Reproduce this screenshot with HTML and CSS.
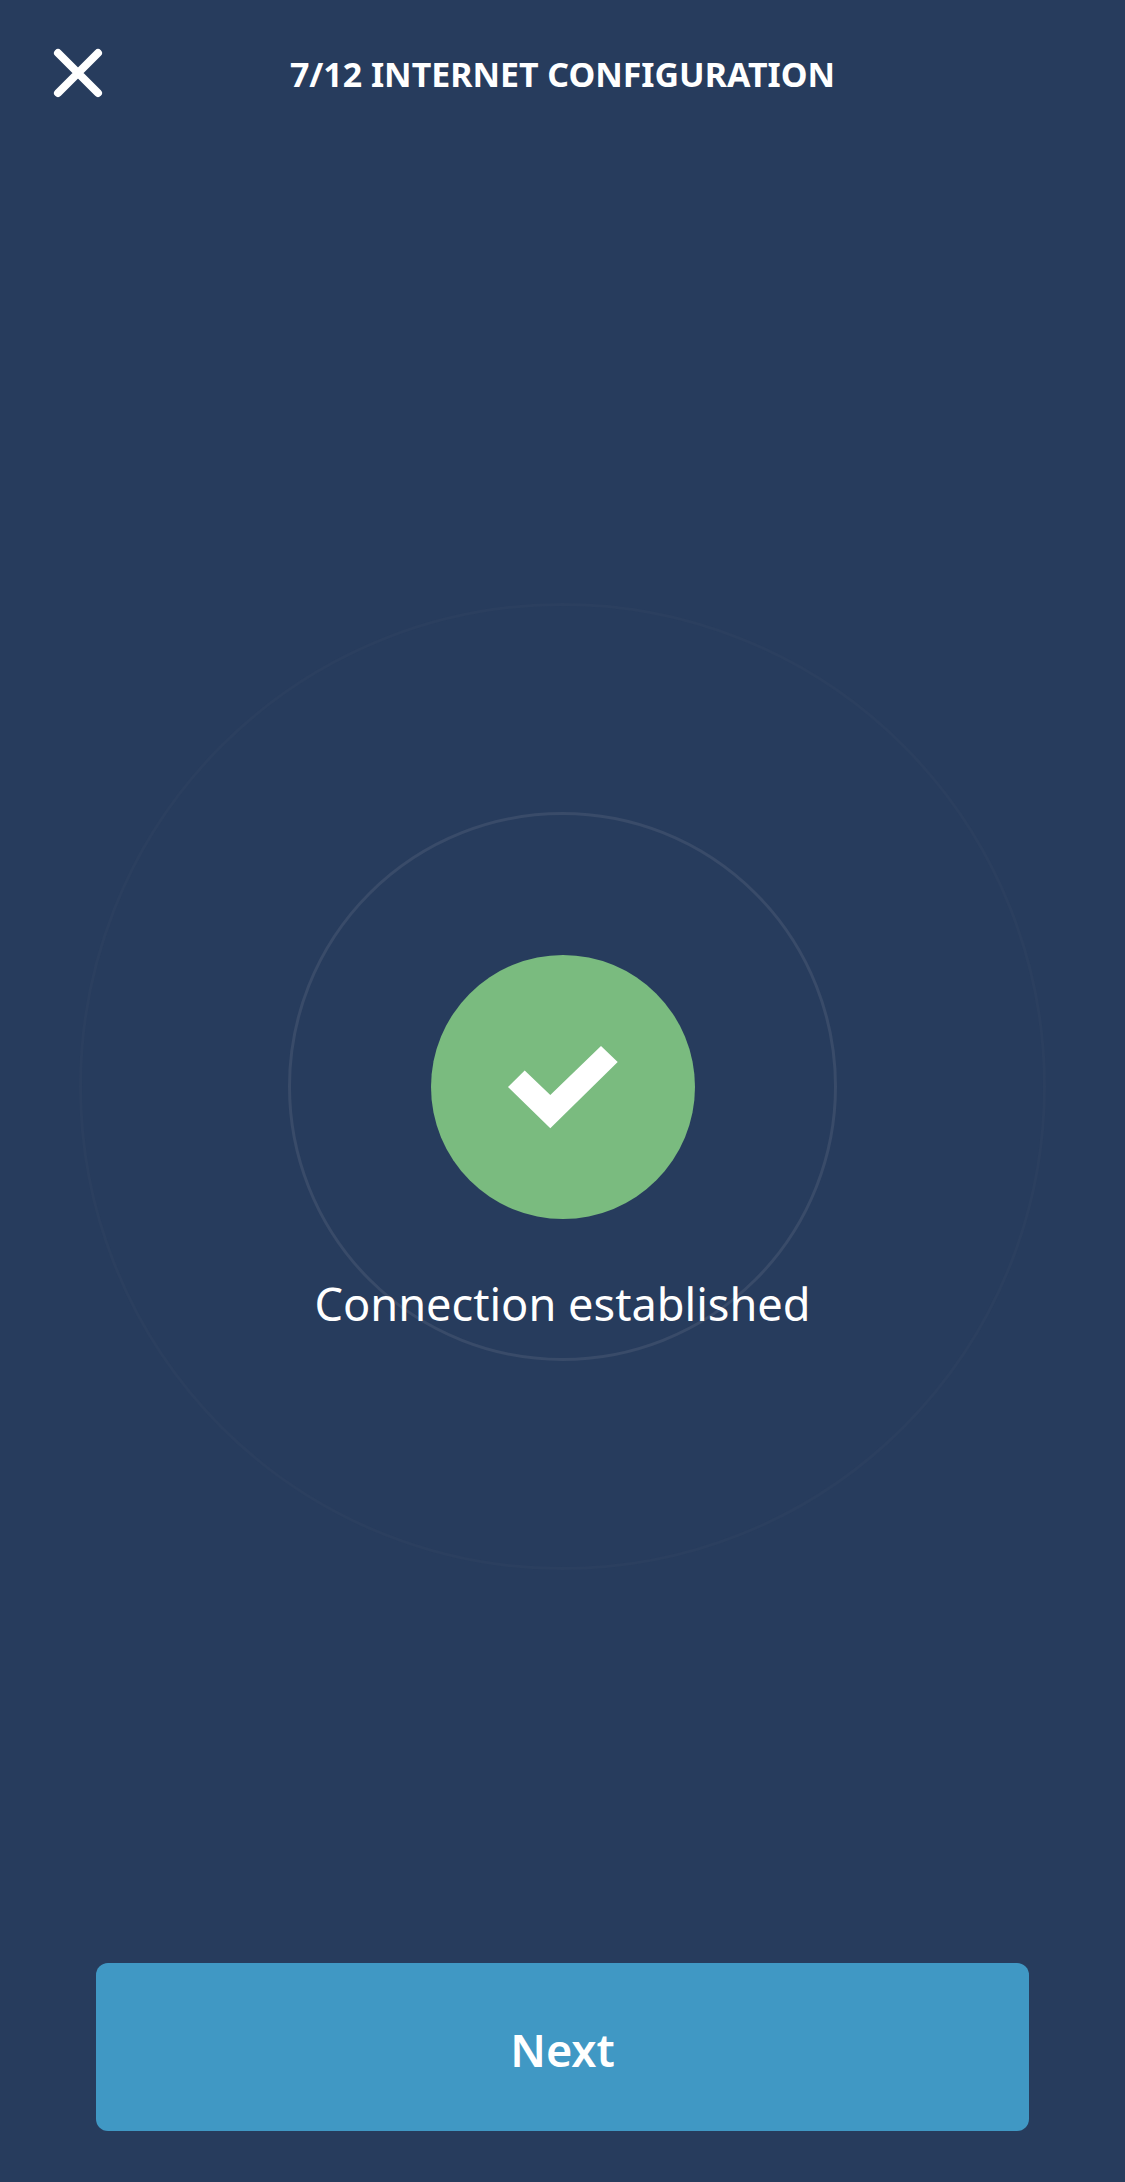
FILE: index.html
```html
<!DOCTYPE html>
<html lang="en">
<head>
<meta charset="utf-8">
<title>Internet configuration</title>
<link rel="stylesheet" href="styles.css">
</head>
<body>
<div class="screen">
  <header class="header">
    <button class="close" aria-label="Close">
      <svg width="52" height="52" viewBox="0 0 52 52"><path d="M6 6 46 46M46 6 6 46" stroke="#fff" stroke-width="8" stroke-linecap="round"/></svg>
    </button>
    <h1 class="title">7/12 INTERNET CONFIGURATION</h1>
  </header>
  <main class="status">
    <div class="badge">
      <span class="ring ring-outer"></span>
      <span class="ring ring-inner"></span>
      <svg class="check" width="264" height="264" viewBox="0 0 264 264"><circle cx="132" cy="132" r="132" fill="#7abb7f"/><path d="M77 132 93.7 115.5 119.3 140 170 91 186.7 107 119.3 173.2Z" fill="#fff"/></svg>
    </div>
    <p class="message">Connection established</p>
  </main>
  <footer class="footer"><button class="next">Next</button></footer>
</div>
</body>
</html>
```
FILE: styles.css
```css
* { box-sizing: border-box; }
body { margin: 0; background: #273c5d; color: #fff; font-family: "Noto Sans", sans-serif; }
button { border: 0; padding: 0; color: inherit; font: inherit; background: none; }
svg { display: block; }
.screen { height: 2182px; display: flex; flex-direction: column; overflow: hidden; }
.header { height: 146px; display: grid; grid-template-columns: 104px 1fr 104px; align-items: center; }
.close { padding-left: 52px; }
.title { margin: 0; padding-top: 2px; text-align: center; font-size: 33.9px; line-height: 48px; font-weight: 700; white-space: nowrap; }
.status { flex: 1; display: flex; flex-direction: column; align-items: center; padding-top: 809px; }
.badge { position: relative; width: 264px; height: 264px; }
.ring { position: absolute; border-radius: 50%; border: 3px solid; }
.ring-inner { top: -143px; left: -142.5px; width: 549px; height: 549px; border-color: #394b69; }
.ring-outer { top: -352px; left: -351.5px; width: 967px; height: 967px; border-color: #2b3f5f; }
.check { position: relative; }
.message { position: relative; margin: 52px 0 0; font-size: 45.15px; line-height: 65px; }
.footer { padding: 0 96px 51px; }
.next { display: block; width: 100%; height: 168px; border-radius: 12px; background: #4098c4; font-size: 45px; font-weight: 600; padding-top: 4px; }
```
